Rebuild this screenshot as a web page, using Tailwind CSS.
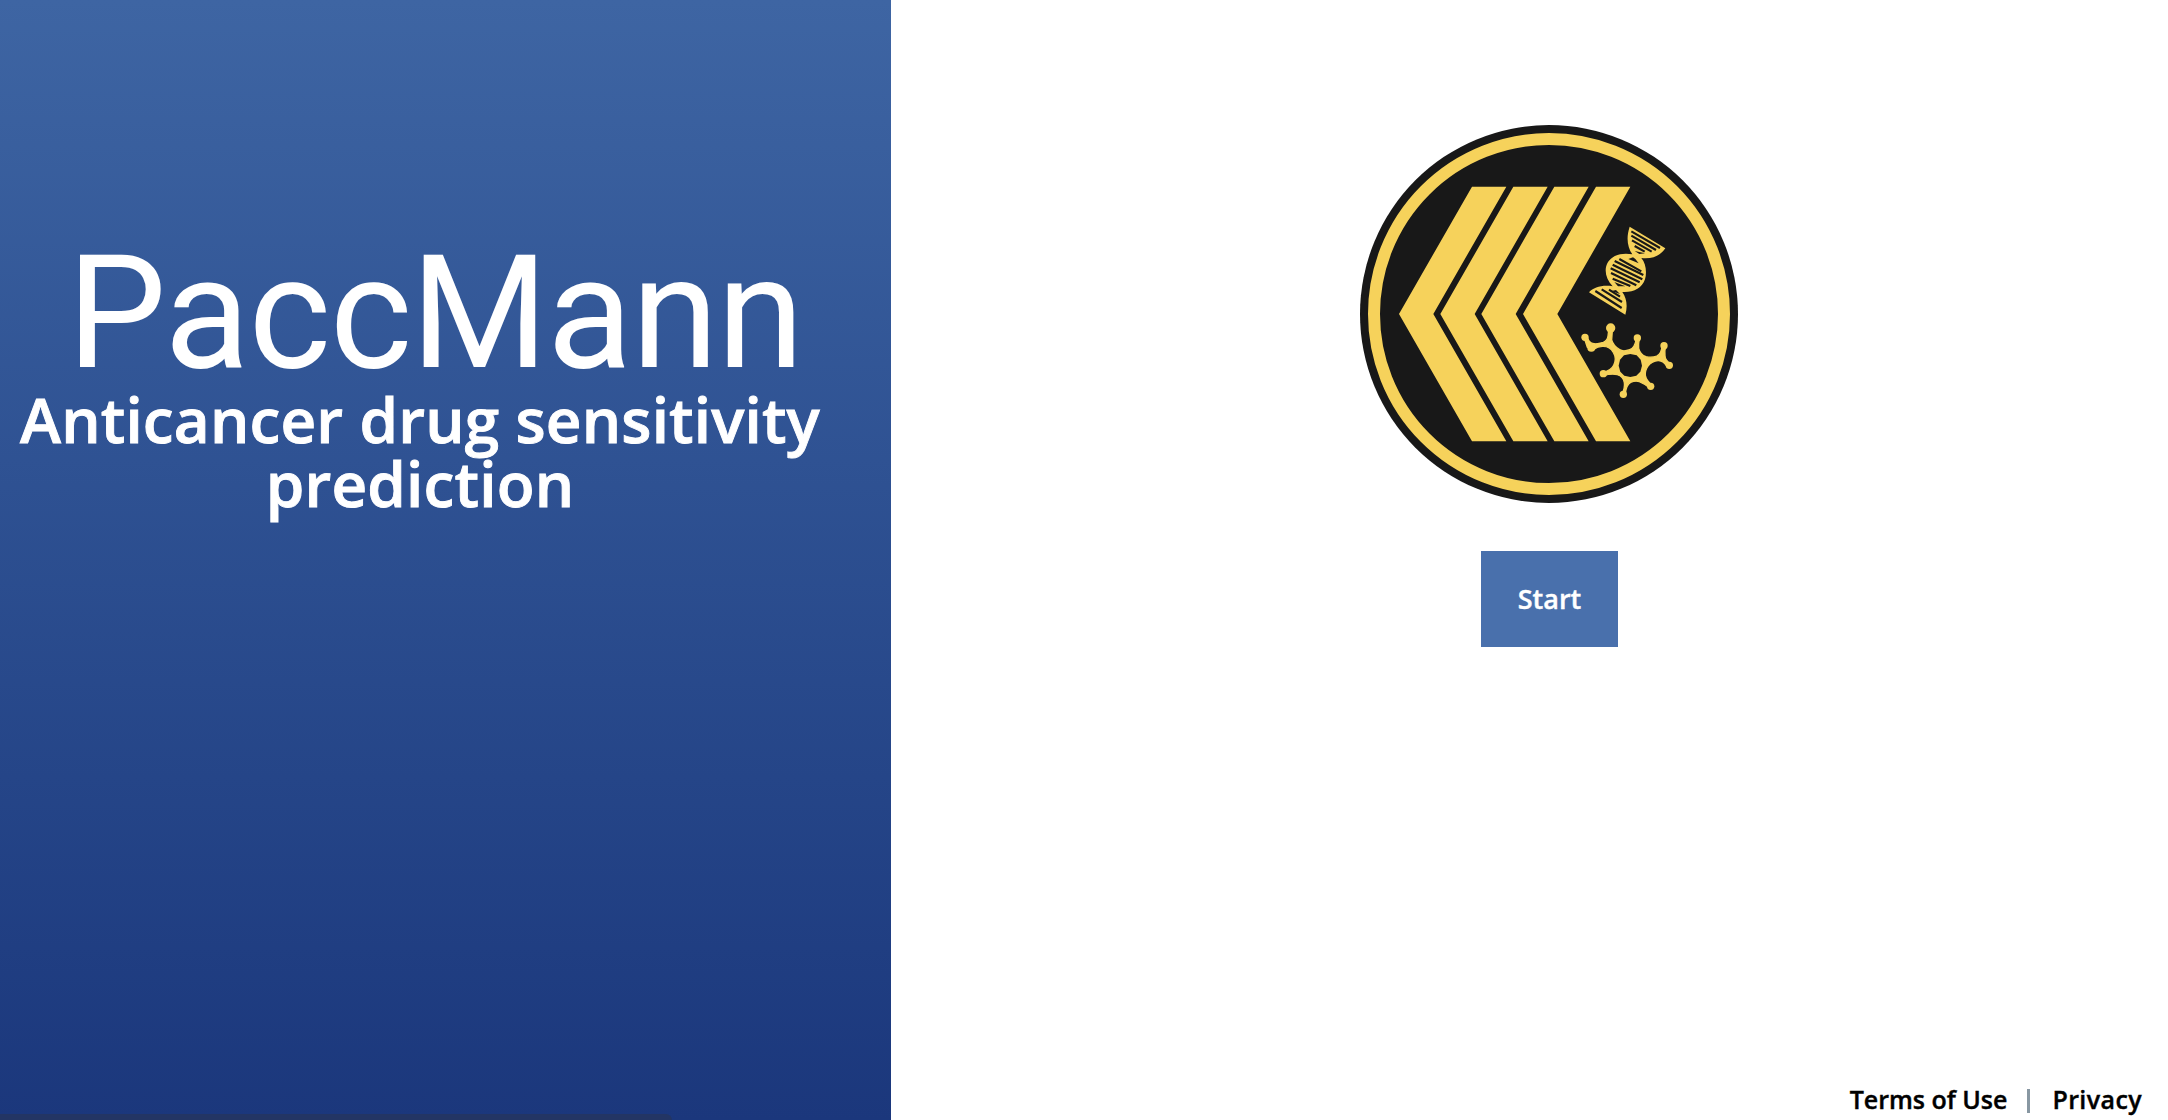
<!DOCTYPE html>
<html lang="en">
<head>
<meta charset="utf-8">
<title>PaccMann</title>
<script src="https://cdn.jsdelivr.net/npm/@tailwindcss/browser@4"></script>
</head>
<body class="flex h-screen w-screen overflow-hidden bg-white font-['Open_Sans',sans-serif]">
  <aside class="flex h-full w-[891px] flex-none flex-col justify-between bg-linear-to-b from-[#3e65a3] to-[#1b377c] text-white">
    <div class="pt-[233px]">
      <h1 class="h-[154px] pl-[67px] font-['Roboto',sans-serif] text-[157.5px] leading-[160px] font-normal tracking-[-1.3px] whitespace-nowrap">PaccMann</h1>
      <h2 class="w-[840px] text-center text-[62px] leading-[64px] font-semibold tracking-[0.16px] whitespace-nowrap [-webkit-text-stroke:0.9px_white]">Anticancer drug sensitivity<br>prediction</h2>
    </div>
    <div class="h-1.5 w-[672px] rounded-tr-md bg-[#233564]"></div>
  </aside>
  <main class="flex h-full min-w-0 flex-1 flex-col pt-[115px]">
    <div class="flex flex-col items-center pl-[41px]">
      <svg class="size-[400px]" viewBox="0 0 1200 1200" fill="none">
        <circle cx="597" cy="597" r="567" fill="#181818"/>
        <circle cx="597" cy="597" r="525" stroke="#f6d25b" stroke-width="36"/>
        <g fill="#f6d25b">
          <path d="M366 215H469L250 597L469 979H366L147 597Z"/>
          <path d="M490 215H593L374 597L593 979H490L271 597Z"/>
          <path d="M613 215H716L497 597L716 979H613L394 597Z"/>
          <path d="M738 215H841L622 597L841 979H738L519 597Z"/>
        </g>
        <g transform="translate(630 285)">
          <path fill="#f6d25b" d="M209 50L316 115C300 138 279 147 244 144C258 160 261 188 255 208C246 235 220 248 187 246C201 266 203 290 196 314L87 247C101 233 125 224 158 229C137 207 132 180 142 160C154 137 184 126 217 133C202 111 198 83 209 50Z"/>
          <g stroke="#181818" stroke-width="6.5">
            <path d="M214 64L300 114M214 77L288 120M216 91L275 125M224 108L254 125"/>
            <path d="M178 147L244 184M164 153L250 195M158 164L247 208M152 175L239 217M153 189L229 226M158 206L211 228"/>
            <path d="M106 243L185 294M125 238L186 276M147 239L180 260"/>
          </g>
          <path fill="#181818" d="M224 123L255 130L238 132ZM205 147L219 142Q228 146 236 160ZM163 216L196 229L174 229ZM154 243L168 240L180 252Z"/>
        </g>
        <g transform="translate(630 585)" fill="#f6d25b">
          <path stroke="#f6d25b" stroke-width="4" stroke-linejoin="round" d="M228 90Q224 114 209 119Q190 126 179 119Q160 108 155 90L157 62H146L144 78Q142 92 130 97Q108 104 98 100Q88 98 84 86L74 88L82 112L102 118Q112 110 127 109Q150 108 160 127Q171 145 161 166Q154 181 130 187V197Q154 190 172 194Q190 199 193 218Q195 232 187 251H196Q199 224 212 217Q227 211 238 215Q251 220 268 233L277 226Q259 212 256 196Q255 180 264 168Q276 154 294 152Q310 151 322 171L333 162Q315 151 315 137Q313 126 317 107H306Q305 131 290 138Q276 144 258 140Q241 134 236 115Q235 103 238 84Z"/>
          <circle cx="152" cy="54" r="14"/><circle cx="75" cy="82" r="11"/><circle cx="94" cy="113" r="12"/>
          <circle cx="232" cy="84" r="11"/><circle cx="312" cy="107" r="11"/><circle cx="328" cy="166" r="11"/>
          <circle cx="272" cy="229" r="11"/><circle cx="190" cy="253" r="11"/><circle cx="130" cy="191" r="11"/>
          <path fill="#181818" d="M211 132L230 136L242 149L246 167L241 185L229 197L211 201L193 197L181 185L176 167L180 149L192 136Z"/>
        </g>
      </svg>
      <button class="mt-9 mr-px h-24 w-[137px] bg-[#4970ac] text-[27px] font-semibold text-white [-webkit-text-stroke:0.4px_white]">Start</button>
    </div>
    <footer class="mt-auto flex h-10 items-start justify-end pr-[26px] text-[25px] leading-[38px] font-semibold text-black [-webkit-text-stroke:0.4px_black]">
      <a>Terms of Use</a>
      <span class="mt-[9px] mr-[22px] ml-5 h-6 w-[3px] bg-[#8897a2]"></span>
      <a class="tracking-[0.4px]">Privacy</a>
    </footer>
  </main>
</body>
</html>
